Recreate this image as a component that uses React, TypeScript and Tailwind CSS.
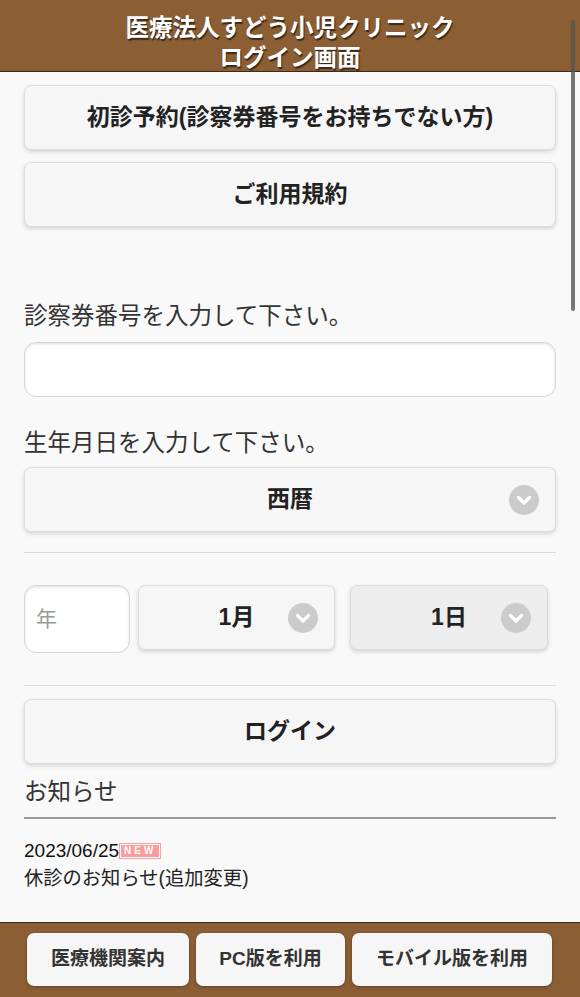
import type { ReactNode } from 'react'

const font = "font-['Liberation_Sans','Noto_Sans_CJK_JP',sans-serif]"

function Chevron() {
  return (
    <span className="flex h-[30px] w-[30px] shrink-0 items-center justify-center rounded-full bg-[#cbcbcb]">
      <svg width="16" height="12" viewBox="0 0 16 12" fill="none" aria-hidden="true">
        <path d="M2.5 3.5 L8 9 L13.5 3.5" stroke="#fff" strokeWidth="3.2" strokeLinecap="round" strokeLinejoin="round" />
      </svg>
    </span>
  )
}

function BigButton({ children }: { children: ReactNode }) {
  return (
    <button
      type="button"
      className="flex h-[65px] w-full items-center justify-center rounded-[7px] border border-[#dcdcdc] bg-[#f6f6f6] text-[23px] font-bold text-[#222] shadow-[0_2px_4px_rgba(0,0,0,0.15)]"
    >
      {children}
    </button>
  )
}

function Select({ label, className = '' }: { label: string; className?: string }) {
  return (
    <div
      className={`relative flex items-center justify-center rounded-[7px] border border-[#dcdcdc] shadow-[0_2px_4px_rgba(0,0,0,0.15)] ${className}`}
    >
      <span className="text-[23px] font-bold text-[#222]">{label}</span>
      <span className="absolute right-[16px] top-1/2 -translate-y-1/2">
        <Chevron />
      </span>
    </div>
  )
}

function FooterButton({ children, w }: { children: ReactNode; w: string }) {
  return (
    <button
      type="button"
      className={`flex h-[53px] items-center justify-center rounded-[7px] bg-[#f6f6f6] text-[19px] font-bold text-[#333] shadow-[0_1px_3px_rgba(0,0,0,0.35)] ${w}`}
    >
      {children}
    </button>
  )
}

export default function App() {
  return (
    <div className={`relative flex h-[997px] w-[580px] flex-col overflow-hidden bg-[#f9f9f9] ${font}`}>
      {/* Header */}
      <header className="flex h-[72px] shrink-0 flex-col items-center justify-center border-b border-[#3a2a18] bg-[#8b5e34] pt-[14px] text-[23.5px] font-bold leading-[30px] text-white [text-shadow:1px_2px_1px_#3a2a18]">
        <div>医療法人すどう小児クリニック</div>
        <div>ログイン画面</div>
      </header>

      {/* Content */}
      <main className="flex flex-1 flex-col px-[24px] pt-[13px]">
        <div className="flex flex-col gap-[12px]">
          <BigButton>初診予約(診察券番号をお持ちでない方)</BigButton>
          <BigButton>ご利用規約</BigButton>
        </div>

        <label className="mt-[74px] text-[23.5px] leading-[30px] text-[#333]">診察券番号を入力して下さい。</label>
        <input
          type="text"
          className="mt-[11px] h-[55px] w-full rounded-[12px] border border-[#d6d6d6] bg-white shadow-[inset_0_1px_3px_rgba(0,0,0,0.12)] outline-none"
        />

        <label className="mt-[31px] text-[23.5px] leading-[30px] text-[#333]">生年月日を入力して下さい。</label>
        <Select label="西暦" className="mt-[9px] h-[65px] bg-[#f6f6f6]" />

        <hr className="mt-[20px] border-t border-[#dadada]" />

        <div className="mt-[32px] flex items-start">
          <div className="flex h-[68px] w-[106px] items-center rounded-[12px] border border-[#d6d6d6] bg-white pl-[11px] text-[21px] text-[#999] shadow-[inset_0_1px_3px_rgba(0,0,0,0.12)]">
            年
          </div>
          <Select label="1月" className="ml-[8px] h-[65px] w-[197px] bg-[#f6f6f6]" />
          <Select label="1日" className="ml-[15px] h-[65px] w-[198px] bg-[#ededed]" />
        </div>

        <hr className="mt-[32px] border-t border-[#dadada]" />

        <div className="mt-[13px]">
          <BigButton>ログイン</BigButton>
        </div>

        <div className="mt-[13px] text-[23.5px] leading-[30px] text-[#333]">お知らせ</div>
        <hr className="mt-[10px] border-t-2 border-[#999]" />

        <div className="mt-[21px] flex items-center text-[19px] leading-[22px] text-[#111]">
          <span>2023/06/25</span>
          <span className="flex h-[16px] items-stretch border border-[#f9a0a0] bg-white p-[1px]">
            <span className="flex items-center bg-[#fa9c9c] px-[3px] text-[10px] font-bold leading-none tracking-[3px] text-white">
              NEW
            </span>
          </span>
        </div>
        <div className="mt-[5px] text-[19.3px] leading-[24px] text-[#222]">休診のお知らせ(追加変更)</div>
      </main>

      {/* Footer */}
      <footer className="flex h-[75px] shrink-0 items-start gap-[7px] border-t border-[#3a2a18] bg-[#8b5e34] pl-[27px] pt-[10px]">
        <FooterButton w="w-[162px]">医療機関案内</FooterButton>
        <FooterButton w="w-[149px]">PC版を利用</FooterButton>
        <FooterButton w="w-[200px]">モバイル版を利用</FooterButton>
      </footer>

      {/* overlay scrollbar */}
      <div className="absolute right-[5px] top-[20px] h-[291px] w-[4px] rounded-full bg-[#555]/80" />
    </div>
  )
}
